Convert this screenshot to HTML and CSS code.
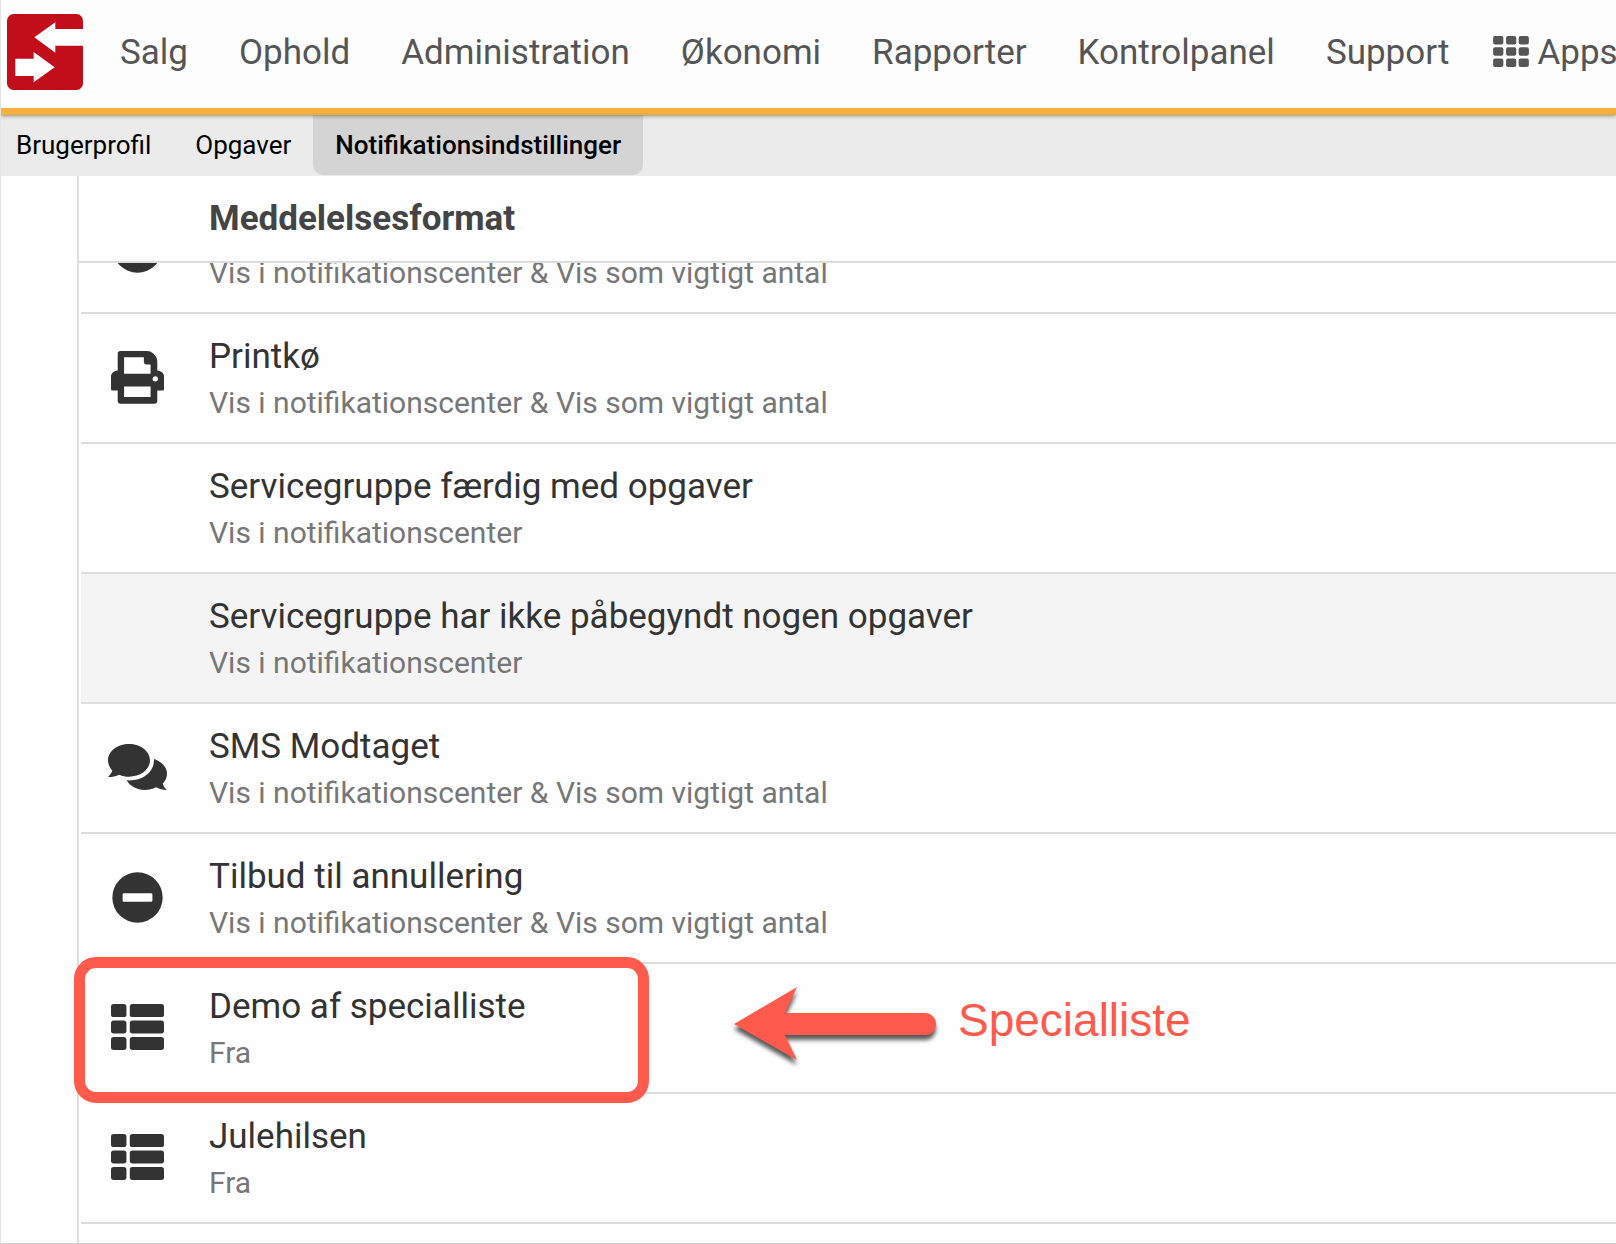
FILE: index.html
```html
<!DOCTYPE html>
<html lang="da">
<head>
  <meta charset="UTF-8">
  <meta name="viewport" content="width=device-width, initial-scale=1.0">
  <title>Notifikationsindstillinger</title>
  <link rel="stylesheet" href="styles.css">
</head>
<body>
  <svg class="sprite" width="0" height="0">
    <symbol id="icon-minus" viewBox="0 0 154 154">
      <path fill-rule="evenodd" d="M77 1a76 76 0 1 0 0 152a76 76 0 1 0 0-152zM36 64h82q4 0 4 4v18q0 4-4 4h-82q-4 0-4-4v-18q0-4 4-4z"/>
    </symbol>
    <symbol id="icon-print" viewBox="0 0 158 158">
      <path fill-rule="evenodd" d="M28 0H108Q118 0 125 7L132 14Q138 21 138 30V58Q158 60 158 78V114Q158 118 154 118H138V150Q138 157 131 157H27Q20 157 20 150V118H4Q0 118 0 114V78Q0 60 20 58V8Q20 0 28 0zM39 19V68H118V40H105Q98 40 98 33V19zM39 106V137H118V106zM132 75a8 8 0 1 0 0 16a8 8 0 1 0 0-16z"/>
    </symbol>
    <symbol id="icon-comments" viewBox="0 0 177 138">
      <path d="M63 0C98 0 126 22 126 49S98 98 63 98C53 98 43 96 34 92C24 97 13 99 0 99C6 93 10 87 13 80C5 71 0 60 0 49C0 22 28 0 63 0z"/>
      <path d="M138 45C162 53 177 70 177 89C177 100 172 111 164 119C167 127 171 132 177 138C164 138 153 135 144 130C133 136 122 138 111 138C86 138 65 126 56 109C100 112 139 88 138 45z"/>
    </symbol>
    <symbol id="icon-list" viewBox="0 0 158 137">
      <rect width="46" height="39" rx="8"/><rect x="56" width="102" height="39" rx="8"/>
      <rect y="49" width="46" height="39" rx="8"/><rect x="56" y="49" width="102" height="39" rx="8"/>
      <rect y="98" width="46" height="39" rx="8"/><rect x="56" y="98" width="102" height="39" rx="8"/>
    </symbol>
  </svg>

  <header class="topbar">
    <a class="logo" href="#" aria-label="Forside">
      <svg width="76" height="76" viewBox="0 0 228 228">
        <rect width="228" height="228" rx="20" fill="#c10e1a"/>
        <path fill="#fff" d="M82 70L145 25V45H228V95H145V116zM25 134H80V114L143 160L80 205V186H25z"/>
      </svg>
    </a>
    <nav class="menu">
      <a href="#">Salg</a>
      <a href="#">Ophold</a>
      <a href="#">Administration</a>
      <a href="#">Økonomi</a>
      <a href="#">Rapporter</a>
      <a href="#">Kontrolpanel</a>
      <a href="#">Support</a>
      <a href="#" class="apps">
        <svg width="36" height="31" viewBox="0 0 105 91">
          <rect width="30" height="25" rx="6"/><rect x="38" width="30" height="25" rx="6"/><rect x="75" width="30" height="25" rx="6"/>
          <rect y="33" width="30" height="25" rx="6"/><rect x="38" y="33" width="30" height="25" rx="6"/><rect x="75" y="33" width="30" height="25" rx="6"/>
          <rect y="66" width="30" height="25" rx="6"/><rect x="38" y="66" width="30" height="25" rx="6"/><rect x="75" y="66" width="30" height="25" rx="6"/>
        </svg>
        Apps
      </a>
    </nav>
  </header>

  <nav class="tabs">
    <a href="#" class="tab">Brugerprofil</a>
    <a href="#" class="tab">Opgaver</a>
    <a href="#" class="tab active">Notifikationsindstillinger</a>
  </nav>

  <main class="panel">
    <h2 class="panel-head">Meddelelsesformat</h2>
    <ul class="list">
      <li class="row partial">
        <div class="row-icon"><svg width="51" height="51"><use href="#icon-minus"/></svg></div>
        <div class="row-text">
          <div class="row-sub">Vis i notifikationscenter &amp; Vis som vigtigt antal</div>
        </div>
      </li>
      <li class="row">
        <div class="row-icon"><svg width="53" height="53"><use href="#icon-print"/></svg></div>
        <div class="row-text">
          <div class="row-title">Printkø</div>
          <div class="row-sub">Vis i notifikationscenter &amp; Vis som vigtigt antal</div>
        </div>
      </li>
      <li class="row">
        <div class="row-icon"></div>
        <div class="row-text">
          <div class="row-title">Servicegruppe færdig med opgaver</div>
          <div class="row-sub">Vis i notifikationscenter</div>
        </div>
      </li>
      <li class="row hovered">
        <div class="row-icon"></div>
        <div class="row-text">
          <div class="row-title">Servicegruppe har ikke påbegyndt nogen opgaver</div>
          <div class="row-sub">Vis i notifikationscenter</div>
        </div>
      </li>
      <li class="row">
        <div class="row-icon"><svg width="59" height="46"><use href="#icon-comments"/></svg></div>
        <div class="row-text">
          <div class="row-title">SMS Modtaget</div>
          <div class="row-sub">Vis i notifikationscenter &amp; Vis som vigtigt antal</div>
        </div>
      </li>
      <li class="row">
        <div class="row-icon"><svg width="51" height="51"><use href="#icon-minus"/></svg></div>
        <div class="row-text">
          <div class="row-title">Tilbud til annullering</div>
          <div class="row-sub">Vis i notifikationscenter &amp; Vis som vigtigt antal</div>
        </div>
      </li>
      <li class="row">
        <div class="row-icon"><svg width="53" height="46"><use href="#icon-list"/></svg></div>
        <div class="row-text">
          <div class="row-title">Demo af specialliste</div>
          <div class="row-sub">Fra</div>
        </div>
        <div class="highlight"></div>
        <div class="callout">
          <svg class="callout-arrow" width="203" height="74" viewBox="0 0 203 74">
            <path d="M0 37L63 0L51 26H191A11 11 0 0 1 191 48H51L63 73z"/>
          </svg>
          <span class="callout-label">Specialliste</span>
        </div>
      </li>
      <li class="row">
        <div class="row-icon"><svg width="53" height="46"><use href="#icon-list"/></svg></div>
        <div class="row-text">
          <div class="row-title">Julehilsen</div>
          <div class="row-sub">Fra</div>
        </div>
      </li>
    </ul>
  </main>
</body>
</html>
```
FILE: styles.css
```css
* {
  box-sizing: border-box;
}
body {
  font-family: Roboto, "Liberation Sans", sans-serif;
  margin: 0;
  height: 100vh;
  display: flex;
  flex-direction: column;
  overflow: hidden;
  background-color: #fefefe;
  border-left: 1px solid #e4e4e4;
  border-bottom: 1px solid #d4d4d4;
}
a {
  color: inherit;
  text-decoration: none;
}
.sprite {
  position: absolute;
}

/* top menu */
.topbar {
  position: relative;
  z-index: 3;
  flex: none;
  display: flex;
  align-items: center;
  gap: 37px;
  height: 115px;
  padding: 0 0 4px 6px;
  background: #fdfdfd;
  border-bottom: 7px solid #fbb03b;
  box-shadow: 0 1px 4px rgba(0, 0, 0, 0.4);
}
.logo svg {
  display: block;
}
.menu {
  display: flex;
  gap: 51px;
  padding-top: 2px;
  font-size: 35px;
  line-height: 42px;
  color: #555;
  white-space: nowrap;
}
.apps {
  display: flex;
  align-items: center;
  gap: 8px;
  margin-left: -7px;
}
.apps svg {
  margin-bottom: 4px;
  fill: #555;
}

/* sub menu */
.tabs {
  flex: none;
  display: flex;
  height: 61px;
  padding-bottom: 1px;
  background: #ebebeb;
}
.tab {
  padding: 0 22px;
  font-size: 26px;
  line-height: 60px;
  color: #000;
}
.tab:first-child {
  padding-left: 15px;
}
.tab.active {
  background: #d4d4d4;
  border-radius: 0 0 10px 10px;
  font-weight: 500;
}

/* notification list */
.panel {
  flex: 1;
  margin-left: 76px;
  border-left: 2px solid #ddd;
}
.panel-head {
  position: relative;
  z-index: 1;
  margin: 0;
  padding: 0 0 0 130px;
  font-size: 35px;
  font-weight: 700;
  line-height: 85px;
  color: #444;
  background: #fefefe;
  border-bottom: 2px solid #ddd;
}
.list {
  list-style: none;
  margin: -79px 0 0;
  padding: 0 0 0 2px;
}
.row {
  position: relative;
  display: flex;
  gap: 16px;
  padding: 20px 0 17px;
  border-bottom: 2px solid #ddd;
}
.row.hovered {
  background: #f4f4f4;
}
.row.partial {
  height: 130px;
  align-items: flex-end;
}
.row-icon {
  flex: none;
  display: flex;
  align-items: center;
  justify-content: center;
  align-self: stretch;
  width: 112px;
  padding-bottom: 5px;
}
.row-icon svg {
  fill: #333;
}
.row-title {
  font-size: 35px;
  line-height: 46px;
  color: #333;
}
.row-sub {
  font-size: 30px;
  line-height: 45px;
  color: #777;
}

/* annotation */
.highlight {
  position: absolute;
  top: -7px;
  left: -7px;
  width: 575px;
  height: 146px;
  border: 11px solid #ff5a4c;
  border-radius: 22px;
}
.callout {
  position: absolute;
  top: 23px;
  left: 653px;
  display: flex;
  align-items: center;
  gap: 21px;
  font-family: "Liberation Sans", Arial, sans-serif;
  font-size: 46px;
  line-height: 66px;
  color: #ff5a4c;
}
.callout-label {
  padding-bottom: 8px;
}
.callout-arrow {
  overflow: visible;
  fill: #ff5a4c;
  filter: drop-shadow(0 5px 2px rgba(0, 0, 0, 0.65));
}
```
